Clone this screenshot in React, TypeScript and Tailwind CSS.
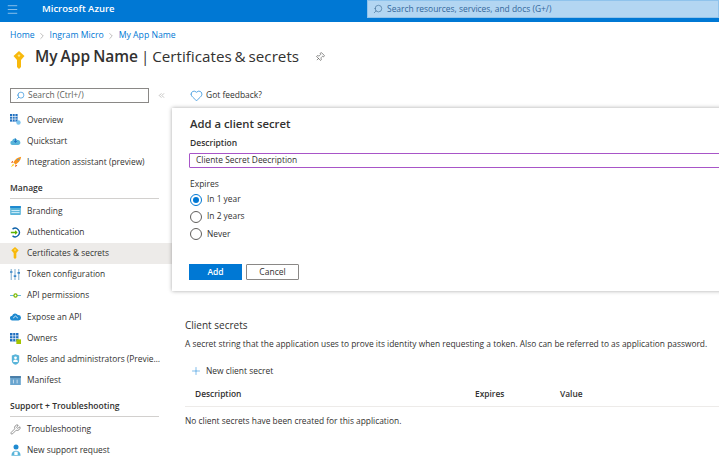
import React from "react";
import { Search, Heart, Pin, ChevronRight, ChevronsLeft, Plus, Menu, Wrench } from "lucide-react";

const KeyIcon = ({ size = 12 }: { size?: number }) => (
  <svg width={size} height={size * 1.5} viewBox="0 0 12 18">
    <path d="M6 0 L11.5 5 L8 9 V16 L6 18 L4 16 V9 L0.5 5 Z" fill="#f8b90c" />
    <circle cx="6" cy="4.6" r="1.2" fill="#fde68a" />
  </svg>
);

const icons: Record<string, React.ReactNode> = {
  overview: (
    <svg width="11" height="11" viewBox="0 0 13 13">
      <rect x="0" y="0" width="9" height="9" fill="#1f6fc0" />
      <path d="M3 0V9M6 0V9M0 3H9M0 6H9" stroke="#fff" strokeWidth="0.8" />
      <circle cx="10" cy="10" r="2.6" fill="#7cc4ee" />
    </svg>
  ),
  quickstart: (
    <svg width="11" height="9" viewBox="0 0 14 12">
      <path d="M3 10.5a2.7 2.7 0 0 1-.4-5.4A3.6 3.6 0 0 1 9.4 4a3.2 3.2 0 0 1 1.4 6.5Z" fill="#59b4d9" />
      <path d="M7 2v5M5 5.2 7 7.4 9 5.2" stroke="#1f6fc0" strokeWidth="1.2" fill="none" />
    </svg>
  ),
  integration: (
    <svg width="12" height="12" viewBox="0 0 14 14">
      <path d="M13 1C9 1.500 6 4 4 7.500L6.500 10C10 8 12.500 5 13 1Z" fill="#f7941d" />
      <path d="M4 7.500 1 8l2-2.500ZM6.500 10 6 13l2.500-2Z" fill="#e8590c" />
      <path d="M3.500 9 1 13l4-2.500Z" fill="#fcd116" />
      <circle cx="9.800" cy="4.200" r="1.100" fill="#4aa3df" />
    </svg>
  ),
  branding: (
    <svg width="11" height="9" viewBox="0 0 13 11">
      <rect width="13" height="11" rx="1" fill="#59b4d9" />
      <rect width="13" height="2.500" fill="#1f8ad0" />
      <rect x="1.500" y="5" width="10" height="1.200" fill="#d6f0fb" />
      <rect x="1.500" y="7.500" width="10" height="1.200" fill="#d6f0fb" />
    </svg>
  ),
  auth: (
    <svg width="11" height="11" viewBox="0 0 13 13" fill="none">
      <path d="M3 2.500A5 5 0 1 1 3 10.500" stroke="#0a5fa8" strokeWidth="1.600" />
      <path d="M1 6.500H8" stroke="#5db300" strokeWidth="1.800" />
      <path d="M6 3.800 9 6.500 6 9.200Z" fill="#5db300" />
    </svg>
  ),
  key: (
    <span className="ml-[1px]">
      <KeyIcon size={8} />
    </span>
  ),
  token: (
    <svg width="10" height="11" viewBox="0 0 12 13">
      <path d="M1.500 0V13M6 0V13M10.500 0V13" stroke="#8fb9d6" strokeWidth="1.400" />
      <path d="M0 3.500H3M4.500 8.500H7.500M9 4.500H12" stroke="#3a87c8" strokeWidth="2" />
    </svg>
  ),
  api: (
    <svg width="11" height="7" viewBox="0 0 14 9">
      <path d="M0 4.500H14" stroke="#59b4d9" strokeWidth="1.200" />
      <circle cx="7" cy="4.500" r="2.800" fill="#7fba00" />
      <circle cx="7" cy="4.500" r="1.200" fill="#fff" />
    </svg>
  ),
  expose: (
    <svg width="11" height="9" viewBox="0 0 14 11">
      <path d="M3.200 10.500a3 3 0 0 1-.5-6A4 4 0 0 1 10 3.500a3.500 3.500 0 0 1 .8 7Z" fill="#1f8ad0" />
      <path d="M4 7.500 7 5l3 2.500" stroke="#fff" strokeWidth="1" fill="none" />
    </svg>
  ),
  owners: (
    <svg width="11" height="11" viewBox="0 0 13 13">
      <rect width="10" height="10" fill="#1f6fc0" />
      <path d="M3.300 0V10M6.600 0V10M0 3.300H10M0 6.600H10" stroke="#fff" strokeWidth="0.8" />
      <rect x="7.500" y="7.500" width="5.500" height="5.500" fill="#a4c400" />
    </svg>
  ),
  roles: (
    <span className="ml-[1px]">
      <svg width="9" height="11" viewBox="0 0 11 13">
        <path d="M1 1.500 5.500 0 10 1.500V8c0 2.500-2 4-4.500 5C3 12 1 10.500 1 8Z" fill="#59b4d9" />
        <circle cx="5.500" cy="4.500" r="1.700" fill="#fff" />
        <path d="M2.500 9.500a3 3 0 0 1 6 0Z" fill="#fff" />
      </svg>
    </span>
  ),
  manifest: (
    <svg width="11" height="9" viewBox="0 0 13 11">
      <rect width="13" height="11" fill="#6aa5cf" />
      <rect width="13" height="2.500" fill="#4a7ea8" />
      <path d="M4 4.500V9M8.500 4.500V9" stroke="#dbeaf5" strokeWidth="1" />
    </svg>
  ),
  wrench: <Wrench size={11} strokeWidth={1.3} color="#505050" />,
  support: (
    <span className="ml-[1px]">
      <svg width="10" height="12" viewBox="0 0 12 14">
        <circle cx="6" cy="3.500" r="3" fill="#1f8ad0" />
        <path d="M0.500 14c0-4 2.200-6 5.500-6s5.500 2 5.500 6Z" fill="#59b4d9" />
        <rect x="4" y="9" width="4" height="4" fill="#fff" />
      </svg>
    </span>
  ),
};

const NavRow = ({ icon, label, active }: { icon: string; label: string; active?: boolean }) => (
  <div className={`flex h-[21.2px] items-center pl-[10px] ${active ? "bg-[#edebe9]" : ""}`}>
    <span className="flex w-[17px] shrink-0 items-center">{icons[icon]}</span>
    <span className="text-[8.400px] whitespace-nowrap text-[#323130]">{label}</span>
  </div>
);

const NavHeading = ({ label }: { label: string }) => (
  <div className="mt-[4px] mr-[13px] mb-[1.400px] ml-[10px] flex h-[22px] items-end border-b border-[#d2d0ce] pb-[3px] text-[8.500px] font-semibold text-[#323130]">
    {label}
  </div>
);

const RadioRow = ({ label, checked }: { label: string; checked?: boolean }) => (
  <label className="ml-[1px] flex h-[17.2px] items-center gap-[5px] text-[8.400px] text-[#323130]">
    <span className={`flex h-[12px] w-[12px] items-center justify-center rounded-full border ${checked ? "border-[#0078d4]" : "border-[#605e5c]"}`}>
      {checked && <span className="h-[6px] w-[6px] rounded-full bg-[#0078d4]" />}
    </span>
    {label}
  </label>
);

export default function App() {
  return (
    <div className="relative h-[462px] w-[719px] overflow-hidden bg-white font-['Open_Sans',sans-serif]">
      <header className="flex h-[22px] items-center bg-[#0078d4] pb-[3px]">
        <Menu size={13} strokeWidth={1.2} color="#cfe4f6" className="ml-[6px]" />
        <span className="ml-[23px] text-[9.500px] font-semibold text-white">Microsoft Azure</span>
        <div className="ml-auto flex h-[18px] w-[352px] items-center self-start border border-[#8fc3ec] bg-[#b3d6f2] pl-[5px]">
          <Search size={10} strokeWidth={1.500} color="#3d6b94" className="-scale-x-100" />
          <span className="ml-[4px] text-[8.450px] text-[#33679c]">Search resources, services, and docs (G+/)</span>
        </div>
      </header>

      <div className="ml-[10px] flex h-[25px] items-center pt-[2px] text-[8.700px] text-[#0078d4]">
        Home
        <ChevronRight size={10} strokeWidth={1} color="#605e5c" className="mx-[2.500px]" />
        Ingram Micro
        <ChevronRight size={10} strokeWidth={1} color="#605e5c" className="mx-[2.500px]" />
        My App Name
      </div>

      <div className="flex h-[20px] items-center pl-[13px]">
        <span className="mt-[6px] flex w-[12px] justify-center"><KeyIcon size={12} /></span>
        <h1 className="ml-[10px] text-[15.200px] whitespace-nowrap text-[#323130] [word-spacing:-1px]">
          <span className="text-[15.500px] font-semibold">My App Name</span> | Certificates &amp; secrets
        </h1>
        <Pin size={10} strokeWidth={1.200} color="#323130" className="ml-[16px] rotate-45" />
      </div>

      <div className="flex">
        <aside className="w-[172px] shrink-0 pt-[21px]">
          <div className="flex h-[15px] items-center">
            <div className="ml-[10px] flex h-[15px] w-[139px] items-center border border-[#8a8886] pl-[5px]">
              <Search size={9} strokeWidth={1.500} color="#0078d4" className="-scale-x-100" />
              <span className="ml-[3px] text-[8.450px] text-[#605e5c]">Search (Ctrl+/)</span>
            </div>
            <ChevronsLeft size={9} strokeWidth={1} color="#605e5c" className="ml-[8px]" />
          </div>
          <div className="mt-[6.400px]">
            <NavRow icon="overview" label="Overview" />
            <NavRow icon="quickstart" label="Quickstart" />
            <NavRow icon="integration" label="Integration assistant (preview)" />
          </div>
          <NavHeading label="Manage" />
          <NavRow icon="branding" label="Branding" />
          <NavRow icon="auth" label="Authentication" />
          <NavRow icon="key" label="Certificates & secrets" active />
          <NavRow icon="token" label="Token configuration" />
          <NavRow icon="api" label="API permissions" />
          <NavRow icon="expose" label="Expose an API" />
          <NavRow icon="owners" label="Owners" />
          <NavRow icon="roles" label="Roles and administrators (Previe…" />
          <NavRow icon="manifest" label="Manifest" />
          <NavHeading label="Support + Troubleshooting" />
          <NavRow icon="wrench" label="Troubleshooting" />
          <NavRow icon="support" label="New support request" />
        </aside>

        <main className="min-w-0 flex-1 pl-[13px]">
          <div className="mt-[20px] flex h-[17px] items-center pl-[5px]">
            <Heart size={13} strokeWidth={1.200} color="#0078d4" />
            <span className="ml-[3px] text-[8.450px] text-[#323130]">Got feedback?</span>
          </div>
          <section className="mt-[213.500px]">
            <h2 className="text-[10px] text-[#323130]">Client secrets</h2>
            <p className="mt-[5.200px] text-[8.400px] whitespace-nowrap text-[#323130]">
              A secret string that the application uses to prove its identity when requesting a token. Also can be referred to as application password.
            </p>
            <div className="mt-[11.200px] flex h-[20px] items-center pl-[5px]">
              <Plus size={12} strokeWidth={1} color="#0078d4" />
              <span className="ml-[4px] text-[8.450px] text-[#323130]">New client secret</span>
            </div>
            <div className="mt-[1.500px] grid h-[24px] grid-cols-[280px_85px_1fr] items-center border-b border-[#edebe9] pl-[10px] text-[8.400px] font-semibold text-[#323130]">
              <span>Description</span>
              <span>Expires</span>
              <span>Value</span>
            </div>
            <p className="mt-[8.200px] text-[8.400px] text-[#323130]">No client secrets have been created for this application.</p>
          </section>
        </main>
      </div>

      <div className="absolute top-[108px] left-[172px] h-[183px] w-[560px] bg-white pt-[7.500px] pl-[17px] shadow-[0_0_4px_rgba(0,0,0,0.35)]">
        <h2 className="ml-[1px] text-[11.300px] font-semibold text-[#323130]">Add a client secret</h2>
        <div className="mt-[4.200px] ml-[1px] text-[8.500px] font-semibold text-[#323130]">Description</div>
        <div className="mt-[3.400px] flex h-[15px] items-center rounded-[1px] border border-[#a855c8] pl-[6px] text-[8.400px] text-[#323130]">
          Cliente Secret Deecription
        </div>
        <div className="mt-[10px] ml-[1px] text-[8.500px] font-medium text-[#323130]">Expires</div>
        <div className="mt-[0.400px] flex flex-col">
          <RadioRow label="In 1 year" checked />
          <RadioRow label="In 2 years" />
          <RadioRow label="Never" />
        </div>
        <div className="mt-[21.700px] flex gap-[4px]">
          <button className="h-[16px] w-[53px] bg-[#0078d4] text-[8.500px] font-semibold text-white">Add</button>
          <button className="h-[16px] w-[53px] rounded-[1px] border border-[#8a8886] bg-white text-[8.500px] text-[#323130]">Cancel</button>
        </div>
      </div>
    </div>
  );
}
